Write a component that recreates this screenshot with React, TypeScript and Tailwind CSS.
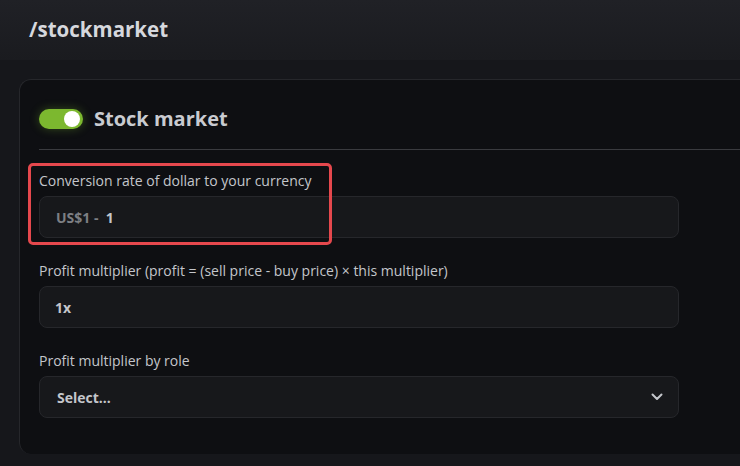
const font = { fontFamily: '"Open Sans", "Noto Sans", sans-serif' };

function Toggle() {
  return (
    <div className="relative h-5 w-11 shrink-0 rounded-full bg-[#7cb82f] shadow-[0_0_10px_rgba(124,184,47,0.35)]">
      <div className="absolute right-[3px] top-[2px] h-4 w-4 rounded-full bg-white" />
    </div>
  );
}

function Field({ label, children }: { label: string; children: React.ReactNode }) {
  return (
    <div className="flex flex-col gap-[5px]">
      <label className="text-[14px] leading-5 text-[#c4c6cb]">{label}</label>
      {children}
    </div>
  );
}

const boxClass =
  "flex h-[42px] w-[640px] items-center rounded-lg border border-[#26272b] bg-[#17181b] pl-[15px] pr-4 text-[14px] font-bold";

export default function App() {
  return (
    <div className="h-[466px] w-[740px] overflow-hidden bg-[#16171b]" style={font}>
      <header className="h-[60px] bg-gradient-to-b from-[#202126] to-[#1a1b1f] px-[29px] pt-[15px]">
        <h1 className="text-[20.5px] font-bold leading-7 text-[#d6d8dd]">/stockmarket</h1>
      </header>
      <div className="pl-[19px] pt-[19px]">
        <section className="relative h-[375px] w-[760px] rounded-tl-xl rounded-bl-xl border-l border-t border-[#26272b] bg-[#0e0f12] pl-[19px] pt-[29px]">
          <div className="flex items-center gap-[11px]">
            <Toggle />
            <h2 className="text-[20px] font-bold leading-5 text-[#c9cbd0]">Stock market</h2>
          </div>
          <div className="mt-5 h-px w-full bg-[#3a3b3f]" />
          <div className="mt-[21px] flex flex-col gap-[23px]">
            <Field label="Conversion rate of dollar to your currency">
              <div className={boxClass}>
                <span className="pl-[1px] text-[#7d7f84]">US$1 -&nbsp;&nbsp;</span>
                <span className="text-[#c4c6cb]">1</span>
              </div>
            </Field>
            <Field label="Profit multiplier (profit = (sell price - buy price) × this multiplier)">
              <div className={boxClass}>
                <span className="text-[#c4c6cb]">1x</span>
              </div>
            </Field>
            <Field label="Profit multiplier by role">
              <div className={boxClass + " justify-between"}>
                <span className="pl-[2px] text-[#c4c6cb]">Select...</span>
                <svg width="12" height="8" viewBox="0 0 12 8" className="-mr-[1px] -mt-[1px]">
                  <path d="M1.5 1.5 6 6l4.5-4.5" fill="none" stroke="#c4c6cb" strokeWidth="2" strokeLinecap="round" strokeLinejoin="round" />
                </svg>
              </div>
            </Field>
          </div>
          <div className="pointer-events-none absolute left-[8px] top-[83px] h-[82px] w-[304px] rounded-[5px] border-[3px] border-[#e5484d]" />
        </section>
      </div>
    </div>
  );
}
